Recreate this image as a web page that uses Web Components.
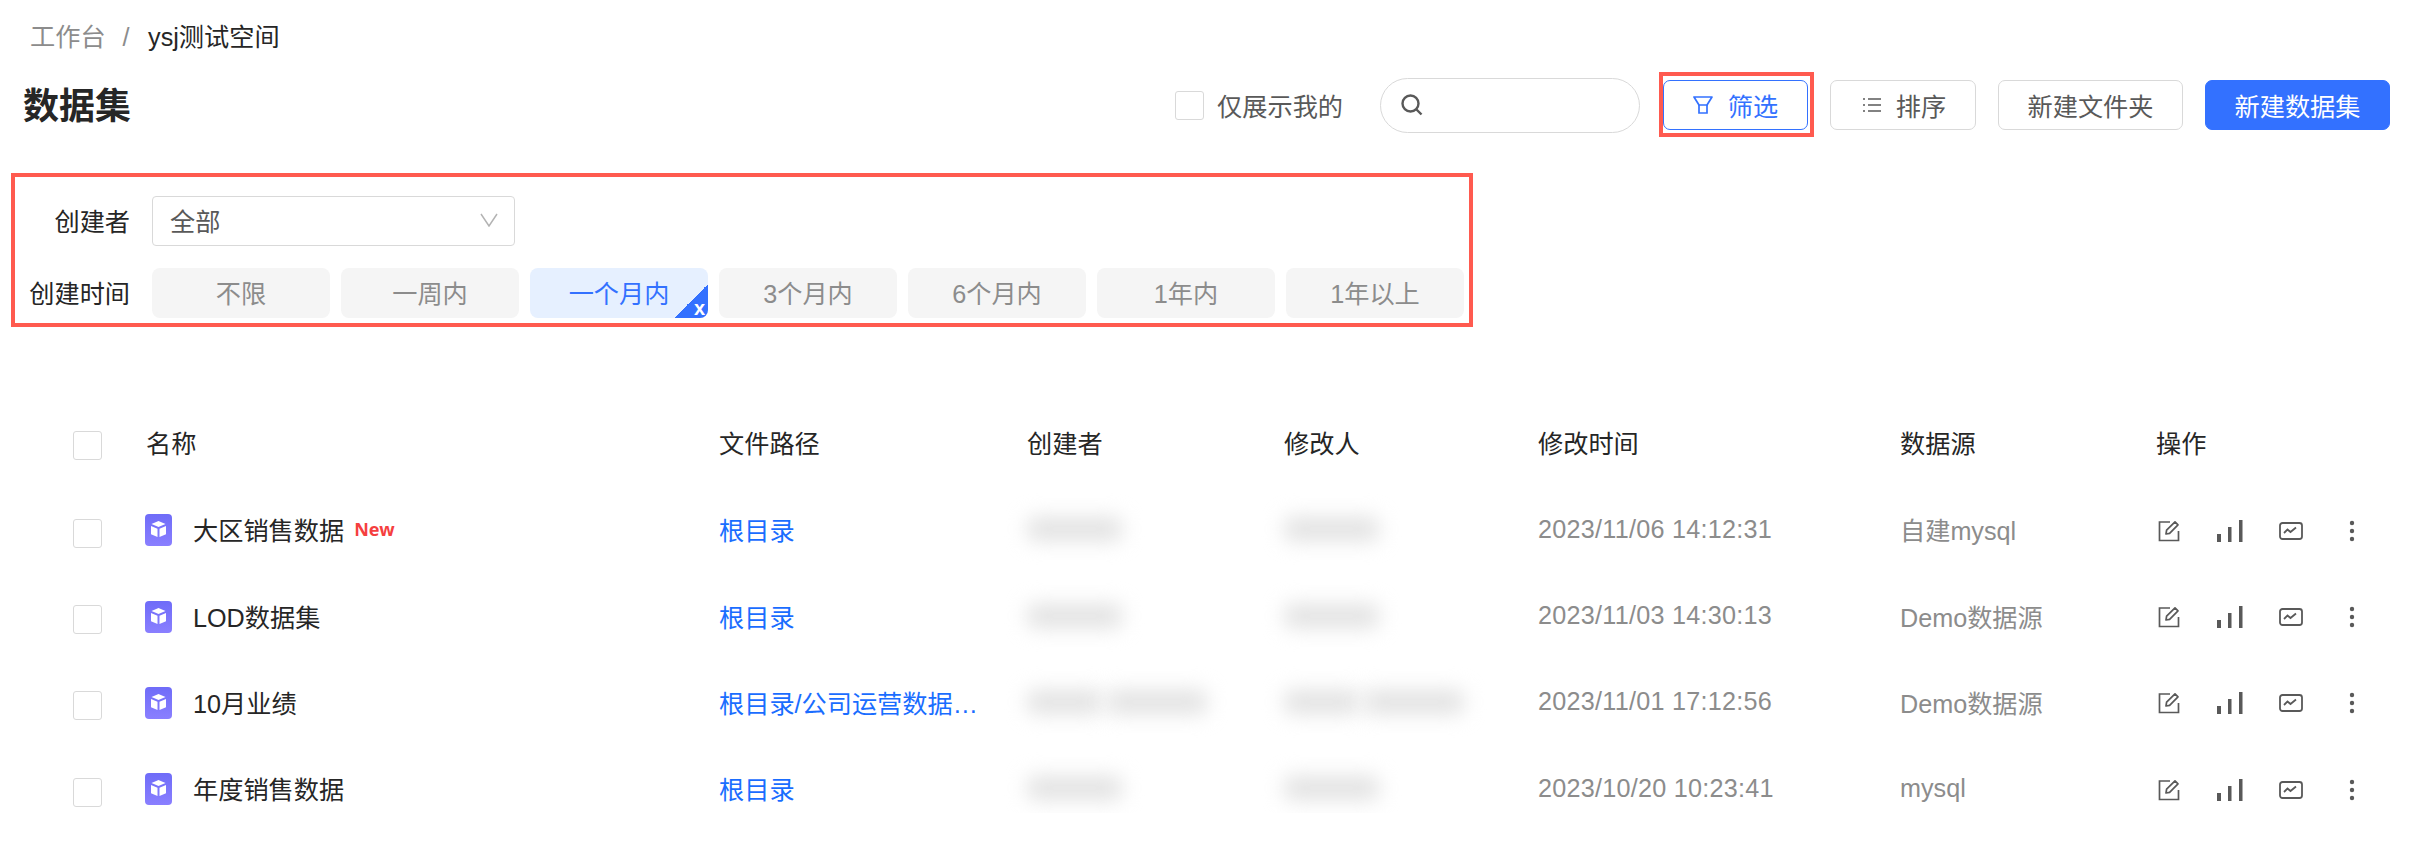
<!DOCTYPE html>
<html>

<head>
  <meta charset="utf-8" />
  <title>数据集</title>
  <style>
    body {
      margin: 0;
      background: #fff;
      font-family: "Liberation Sans", "Noto Sans CJK SC", sans-serif;
      font-size: 25.2px;
      color: #262626;
    }
  </style>
</head>

<body>
  <script>
    const icons = {
      search: '<svg width="26" height="26" viewBox="0 0 26 26" fill="none" stroke="#595959" stroke-width="2.4"><circle cx="11.500" cy="11.500" r="8"/><path d="M17.500 17.500l5 5"/></svg>',
      filter: '<svg width="20" height="18" viewBox="0 0 20 18" fill="none" stroke="currentColor" stroke-width="1.700"><path d="M1 1h18l-5 8H6z" stroke-linejoin="round"/><path d="M6 9v8h8V9"/></svg>',
      sort: '<svg width="18" height="18" viewBox="0 0 18 18" fill="none" stroke="currentColor" stroke-width="1.500"><path d="M5 3h13M5 9h13M5 15h13M0 3h2M0 9h2M0 15h2"/></svg>',
      edit: '<svg width="22" height="22" viewBox="0 0 22 22" fill="none" stroke="#595959" stroke-width="1.700"><path d="M12 2H1.500v18.500H20.500V11"/><path d="M8 14l.6-3.800L17 1.800l3 3-8.400 8.500z" stroke-linejoin="round"/></svg>',
      bars: '<svg width="26" height="22" viewBox="0 0 26 22" fill="#595959"><rect x="0" y="14" width="4" height="8"/><rect x="11" y="7" width="3.500" height="15"/><rect x="22" y="0" width="3.500" height="22"/></svg>',
      chart: '<svg width="24" height="18" viewBox="0 0 24 18" fill="none" stroke="#595959" stroke-width="1.800"><rect x="1" y="1" width="22" height="16" rx="2.500"/><path d="M5 11l3.500-3.500 3 2.500 5.500-4.500"/></svg>',
      dots: '<svg width="6" height="22" viewBox="0 0 6 22" fill="#595959"><circle cx="3" cy="3" r="2.200"/><circle cx="3" cy="11" r="2.200"/><circle cx="3" cy="19" r="2.200"/></svg>',
      cube: '<svg width="27" height="32" viewBox="0 0 27 32"><defs><linearGradient id="g" x1="0" y1="0" x2="0" y2="1"><stop offset="0" stop-color="#6f6cf8"/><stop offset="1" stop-color="#8a7fff"/></linearGradient></defs><rect width="27" height="32" rx="4" fill="url(#g)"/><path d="M13.500 7l7 3-7 3-7-3z" fill="#fff"/><path d="M6 12l6.500 2.800V23L6 20.200zM21 12l-6.500 2.800V23L21 20.200z" fill="#fff"/></svg>'
    };

    class UiCheckbox extends HTMLElement {
      constructor() {
        super();
        this.attachShadow({ mode: 'open' }).innerHTML = `
          <style>
            :host { display: block; width: 29px; height: 29px; box-sizing: border-box; border: 1.5px solid #d9d9d9; border-radius: 3px; background: #fff; }
          </style>`;
      }
    }

    class UiButton extends HTMLElement {
      constructor() {
        super();
        this.attachShadow({ mode: 'open' }).innerHTML = `
          <style>
            :host { display: inline-flex; position: relative; align-items: center; justify-content: center; gap: 15px; height: 50px; box-sizing: border-box; border: 1.5px solid #d9d9d9; border-radius: 7px; color: #595959; background: #fff; }
            :host([primary]) { background: #3371ff; border-color: #3371ff; color: #fff; }
            :host([active]) { border-color: #3371ff; color: #3371ff; }
            :host([active])::after { content: ""; position: absolute; top: -9.500px; bottom: -7.500px; left: -5.500px; right: -6.500px; border: 4px solid #ff5a4f; }
            .ic { display: flex; }
            .ic:empty { display: none; }
          </style>
          <span class="ic"></span><slot></slot>`;
      }

      connectedCallback() {
        const name = this.getAttribute('icon');
        if (name) this.shadowRoot.querySelector('.ic').innerHTML = icons[name];
      }
    }

    class PageHead extends HTMLElement {
      constructor() {
        super();
        this.attachShadow({ mode: 'open' }).innerHTML = `
          <style>
            :host { display: block; }
            .crumb { padding: 22px 0 0 30px; line-height: 30px; color: #262626; }
            .crumb .home { color: #8c8c8c; }
            .crumb .sep { color: #8c8c8c; margin: 0 18.500px 0 17px; }
            .bar { display: flex; align-items: center; margin-top: 21px; height: 64px; padding: 0 46px 0 23px; }
            h1 { margin: 0; padding-top: 4px; font-size: 36px; line-height: 60px; font-weight: 700; color: #262626; flex: 1; }
            .only { display: flex; align-items: center; gap: 13px; color: #595959; margin-right: 37px; }
            .search { display: flex; align-items: center; width: 260px; height: 55px; box-sizing: border-box; padding-left: 18px; border: 1.5px solid #d9d9d9; border-radius: 28px; margin-right: 23px; }
            .btns { display: flex; gap: 22px; }
          </style>
          <div class="crumb"><span class="home">工作台</span><span class="sep">/</span>ysj测试空间</div>
          <div class="bar">
            <h1>数据集</h1>
            <div class="only"><ui-checkbox></ui-checkbox>仅展示我的</div>
            <div class="search">${icons.search}</div>
            <div class="btns">
              <ui-button icon="filter" active style="width:145px">筛选</ui-button>
              <ui-button icon="sort" style="width:146px;padding-left:3px">排序</ui-button>
              <ui-button style="width:185px">新建文件夹</ui-button>
              <ui-button primary style="width:185px">新建数据集</ui-button>
            </div>
          </div>`;
      }
    }

    class FilterChip extends HTMLElement {
      constructor() {
        super();
        this.attachShadow({ mode: 'open' }).innerHTML = `
          <style>
            :host { display: flex; position: relative; overflow: hidden; align-items: center; justify-content: center; width: 178px; height: 50px; box-sizing: border-box; padding-bottom: 2px; border-radius: 8px; background: #f5f5f5; color: #8c8c8c; }
            :host([active]) { background: #e6f0ff; color: #3371ff; }
            .corner { display: none; position: absolute; right: 0; bottom: 0; width: 34px; height: 34px; background: linear-gradient(135deg, transparent 50%, #3371ff 50%); }
            :host([active]) .corner { display: block; }
            .corner span { position: absolute; right: 3px; bottom: 0; font-size: 20px; line-height: 20px; font-weight: 700; color: #fff; }
          </style>
          <slot></slot><div class="corner"><span>x</span></div>`;
      }
    }

    class FilterPanel extends HTMLElement {
      constructor() {
        super();
        this.attachShadow({ mode: 'open' }).innerHTML = `
          <style>
            :host { display: grid; grid-template-columns: 115px auto; column-gap: 22px; row-gap: 22px; align-items: center; width: 1462px; box-sizing: border-box; margin: 36px 0 0 11px; padding: 19px 0 5px; border: 4px solid #ff5a4f; }
            .label { text-align: right; color: #262626; white-space: nowrap; padding-bottom: 2px; }
            .select { display: flex; align-items: center; justify-content: space-between; width: 363px; height: 50px; box-sizing: border-box; padding: 0 15px 2px 17px; border: 1.5px solid #d9d9d9; border-radius: 4px; color: #595959; }
            .chips { display: flex; gap: 11px; }
          </style>
          <div class="label">创建者</div>
          <div class="select">全部<svg width="20" height="14" viewBox="0 0 20 14" fill="none" stroke="#b3b3b3" stroke-width="1.500"><path d="M2 1l8 12 8-12"/></svg></div>
          <div class="label">创建时间</div>
          <div class="chips"><slot></slot></div>`;
      }
    }

    class DataTable extends HTMLElement {
      constructor() {
        super();
        this.attachShadow({ mode: 'open' }).innerHTML = `
          <style>
            :host { display: block; height: 401px; margin-top: 85px; overflow: hidden; padding-left: 73px; }
            .head { display: grid; grid-template-columns: 73px 573px 308px 257px 254px 362px 256px 1fr; align-items: center; height: 60px; color: #262626; }
            .head ui-checkbox { margin-top: 7px; }
            .rows { display: flex; flex-direction: column; margin-top: 14px; }
          </style>
          <div class="head">
            <ui-checkbox></ui-checkbox><div>名称</div><div>文件路径</div><div>创建者</div><div>修改人</div><div>修改时间</div><div>数据源</div><div>操作</div>
          </div>
          <div class="rows"><slot></slot></div>`;
      }
    }

    class DataRow extends HTMLElement {
      connectedCallback() {
        const a = n => this.getAttribute(n) || '';
        // names are blurred in the reference, so only grey blobs here
        const blur = () => '<div class="blurs">' + a('w').split(',').map(w => `<div class="blur" style="width:${w}px"></div>`).join('') + '</div>';
        this.attachShadow({ mode: 'open' }).innerHTML = `
          <style>
            :host { display: grid; grid-template-columns: 73px 573px 308px 257px 254px 362px 256px 1fr; align-items: center; height: 86.400px; }
            ui-checkbox { margin-top: 8px; }
            .name { display: flex; align-items: center; color: #262626; margin-left: -1px; }
            .name svg { margin: 2px 21px 0 0; }
            .new { margin-left: 10px; font-family: "Noto Sans", sans-serif; font-size: 18px; font-weight: 700; color: #f53f3f; }
            .path { color: #1a6dff; white-space: nowrap; }
            .blurs { display: flex; gap: 5px; }
            .blur { height: 24px; background: #e2e2e2; border-radius: 8px; filter: blur(10px); }
            .grey { color: #8c8c8c; }
            .time { letter-spacing: .25px; }
            .ops { display: flex; align-items: center; padding: 3px 0 0 2px; }
            .ops > span { display: flex; }
            .ops > span:nth-child(1) { width: 59px; }
            .ops > span:nth-child(2) { width: 62px; }
            .ops > span:nth-child(3) { width: 70px; }
          </style>
          <ui-checkbox></ui-checkbox>
          <div class="name">${icons.cube}${a('name')}${this.hasAttribute('new') ? '<span class="new">New</span>' : ''}</div>
          <div class="path">${a('path')}</div>
          <div>${blur()}</div>
          <div>${blur()}</div>
          <div class="grey time">${a('time')}</div>
          <div class="grey">${a('source')}</div>
          <div class="ops"><span>${icons.edit}</span><span>${icons.bars}</span><span>${icons.chart}</span><span>${icons.dots}</span></div>`;
      }
    }

    customElements.define('ui-checkbox', UiCheckbox);
    customElements.define('ui-button', UiButton);
    customElements.define('page-head', PageHead);
    customElements.define('filter-chip', FilterChip);
    customElements.define('filter-panel', FilterPanel);
    customElements.define('data-table', DataTable);
    customElements.define('data-row', DataRow);
  </script>

  <page-head></page-head>
  <filter-panel>
    <filter-chip>不限</filter-chip>
    <filter-chip>一周内</filter-chip>
    <filter-chip active>一个月内</filter-chip>
    <filter-chip>3个月内</filter-chip>
    <filter-chip>6个月内</filter-chip>
    <filter-chip>1年内</filter-chip>
    <filter-chip>1年以上</filter-chip>
  </filter-panel>
  <data-table>
    <data-row name="大区销售数据" new path="根目录" w="95" time="2023/11/06 14:12:31" source="自建mysql"></data-row>
    <data-row name="LOD数据集" path="根目录" w="95" time="2023/11/03 14:30:13" source="Demo数据源"></data-row>
    <data-row name="10月业绩" path="根目录/公司运营数据…" w="75,100" time="2023/11/01 17:12:56" source="Demo数据源"></data-row>
    <data-row name="年度销售数据" path="根目录" w="95" time="2023/10/20 10:23:41" source="mysql"></data-row>
  </data-table>
</body>

</html>
